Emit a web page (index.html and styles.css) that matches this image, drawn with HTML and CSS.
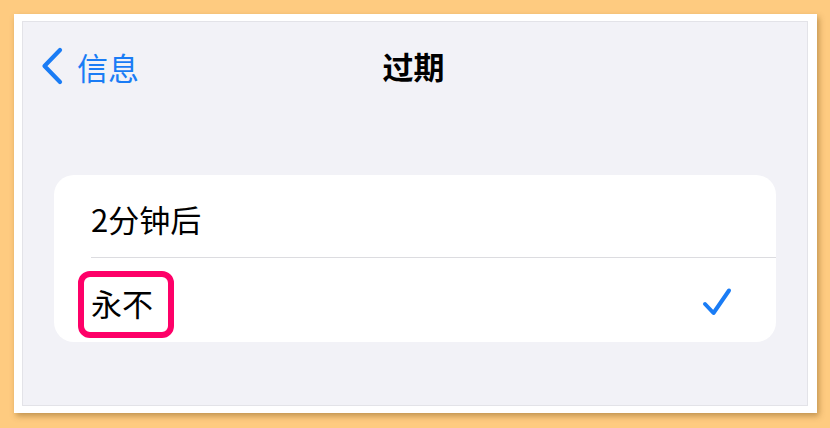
FILE: index.html
```html
<!DOCTYPE html>
<html lang="zh-CN">
<head>
<meta charset="utf-8">
<title>过期</title>
<link rel="stylesheet" href="styles.css">
</head>
<body>
<div class="frame">
  <div class="screen">
    <div class="nav">
      <div class="back">
        <svg class="chev" width="24" height="38" viewBox="0 0 24 38" aria-hidden="true">
          <path d="M20 3 L4.5 19 L20 35" fill="none" stroke="#1a7cf5" stroke-width="4.2" stroke-linecap="round" stroke-linejoin="round"/>
        </svg>
        <span class="back-text">信息</span>
      </div>
      <div class="title">过期</div>
      <div class="spacer"></div>
    </div>
    <div class="card">
      <div class="row row-first">
        <span class="label">2分钟后</span>
      </div>
      <div class="row row-last">
        <span class="label">永不</span>
        <svg class="check" width="30" height="30" viewBox="0 0 30 30" aria-hidden="true">
          <path d="M3 17 L11.5 26 L27 3.5" fill="none" stroke="#1a7cf5" stroke-width="4" stroke-linecap="round" stroke-linejoin="round"/>
        </svg>
        <div class="highlight"></div>
      </div>
    </div>
  </div>
</div>
</body>
</html>
```
FILE: styles.css
```css
html, body {
  margin: 0;
  padding: 0;
}
body {
  width: 830px;
  height: 428px;
  background: #fecb80;
  font-family: "Noto Sans CJK SC", "Noto Sans", sans-serif;
  overflow: hidden;
}
.frame {
  margin: 14px 0 0 14px;
  width: 803px;
  height: 399px;
  box-sizing: border-box;
  padding: 7px 9px 7px 8px;
  background: #ffffff;
  box-shadow: 2px 3px 6px rgba(120, 80, 20, 0.45);
}
.screen {
  width: 100%;
  height: 100%;
  box-sizing: border-box;
  background: #f2f2f7;
  border: 1px solid #e3e3e8;
}
.nav {
  height: 88px;
  display: grid;
  grid-template-columns: 1fr auto 1fr;
  align-items: center;
  padding: 0 20px 0 17px;
}
.back {
  display: flex;
  align-items: center;
  color: #1a7cf5;
}
.chev {
  display: block;
  margin-right: 13px;
}
.back-text {
  font-size: 31px;
  line-height: 1;
}
.title {
  font-size: 31px;
  font-weight: 700;
  line-height: 1;
  color: #000;
  margin-top: -2px;
}
.card {
  margin: 65px 31px 0 31px;
  background: #ffffff;
  border-radius: 20px;
}
.row {
  position: relative;
  display: flex;
  align-items: center;
  justify-content: space-between;
  margin-left: 37px;
  padding-right: 44px;
}
.row-first {
  height: 83px;
  border-bottom: 1px solid #dcdce0;
  padding-top: 4px;
  box-sizing: border-box;
}
.row-last {
  height: 84px;
  padding-top: 4px;
  box-sizing: border-box;
}
.label {
  font-size: 31px;
  line-height: 1;
  color: #000;
}
.check {
  display: block;
}
.highlight {
  position: absolute;
  left: -13px;
  top: 13px;
  width: 96px;
  height: 67px;
  box-sizing: border-box;
  border: 6px solid #fe0068;
  border-radius: 12px;
}
```
